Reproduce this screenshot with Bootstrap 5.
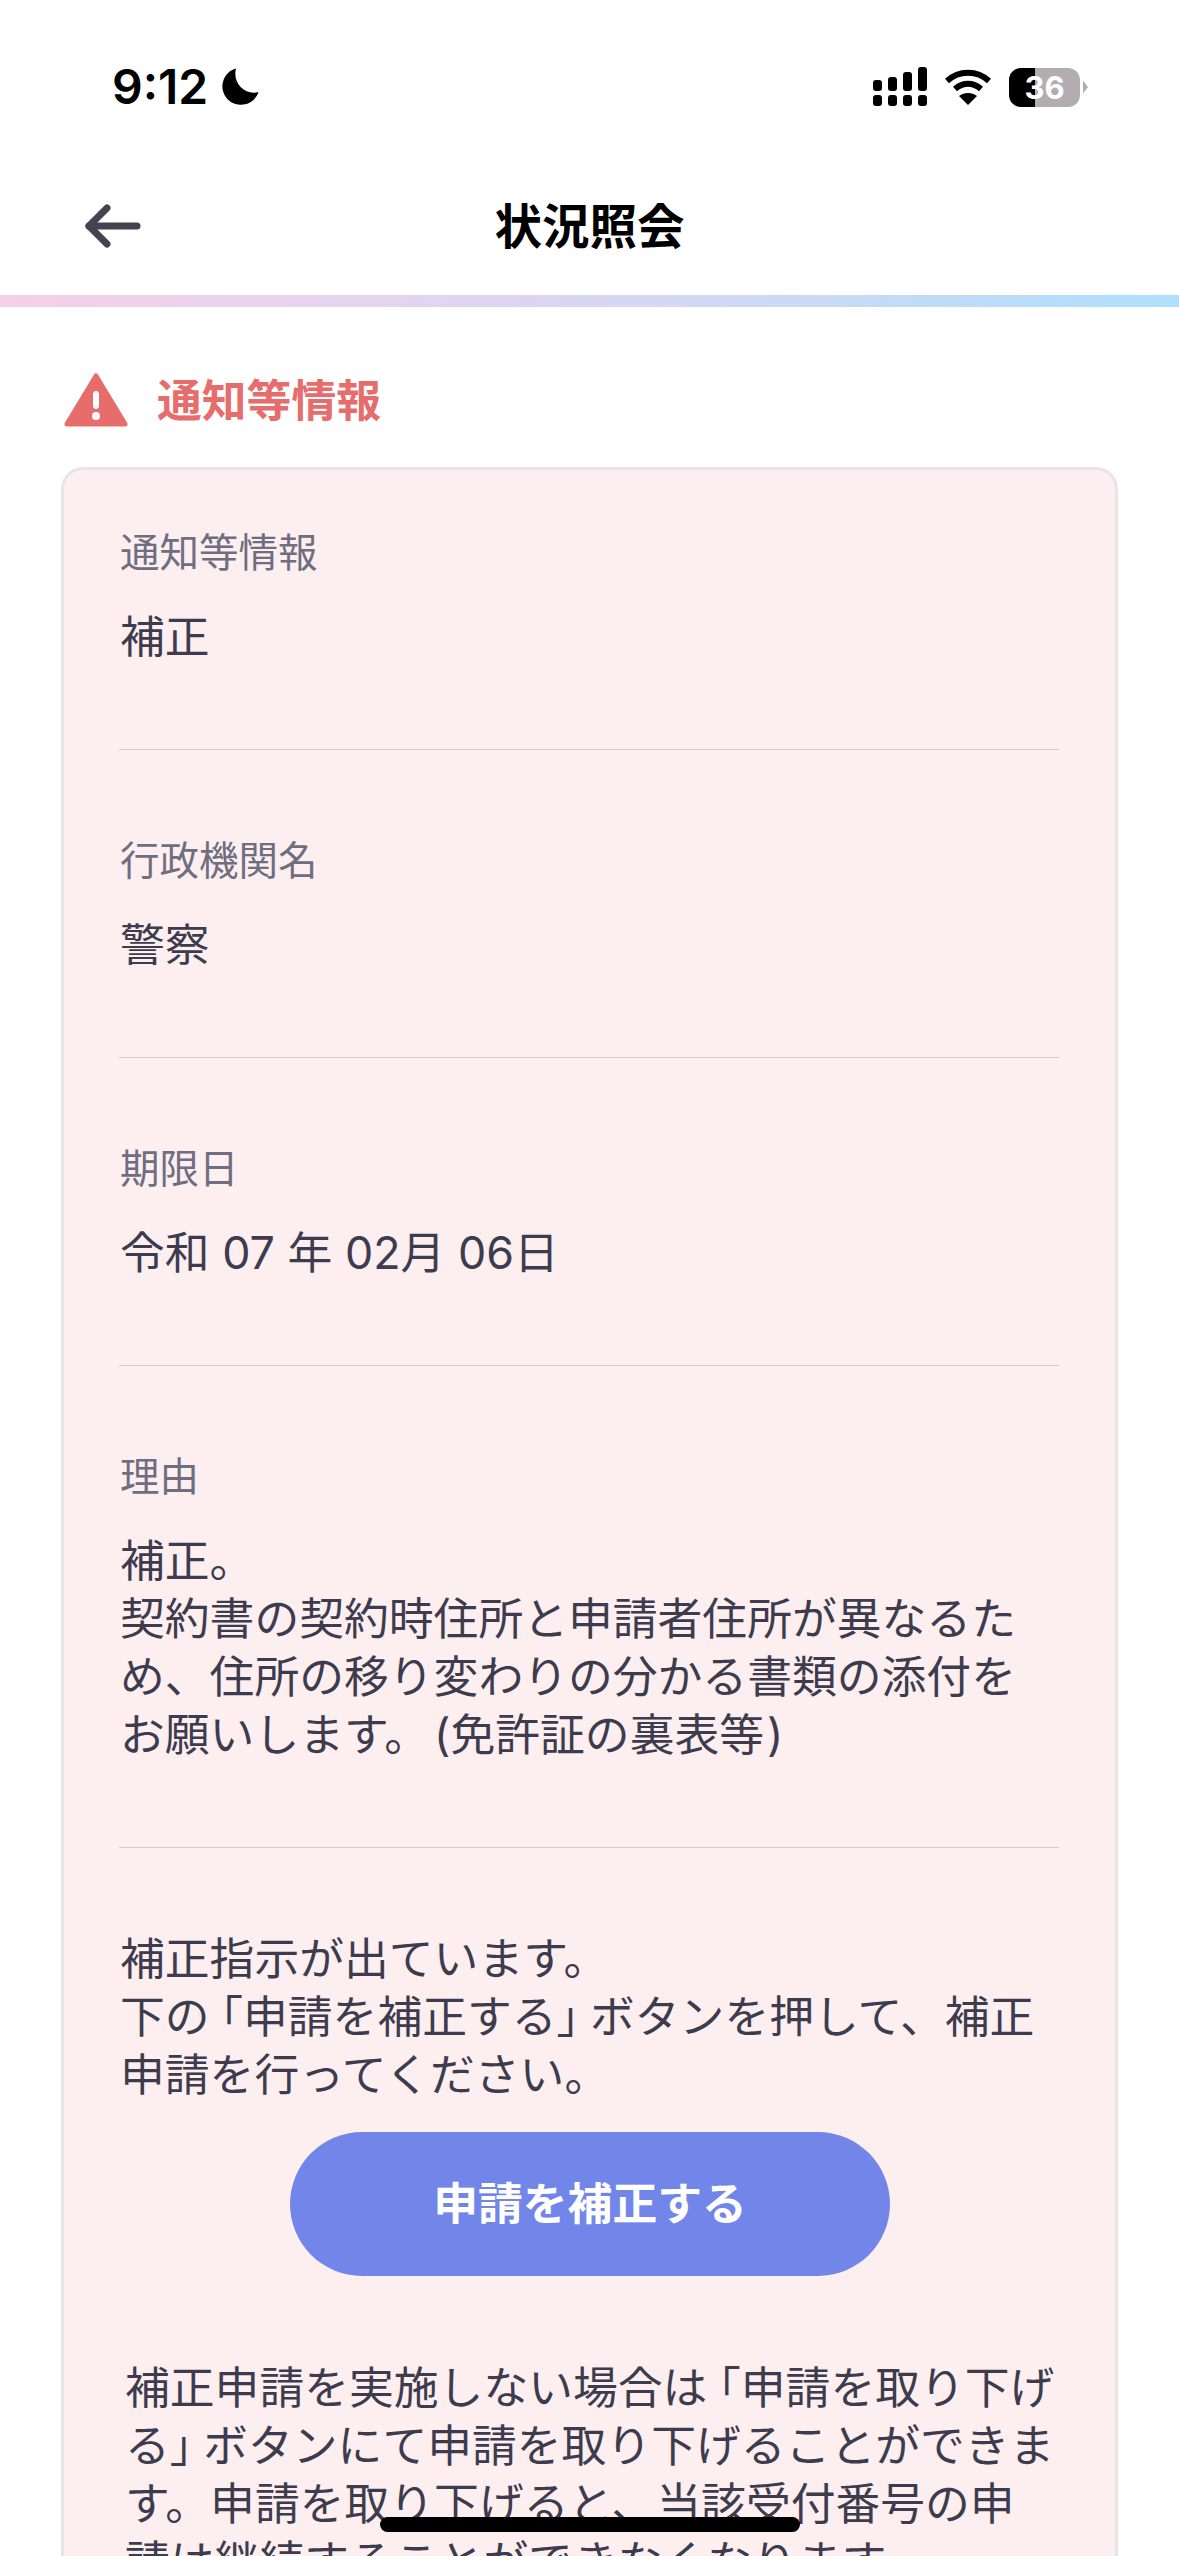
<!DOCTYPE html>
<html lang="ja">
<head>
    <meta charset="UTF-8">
    <meta name="viewport" content="width=device-width, initial-scale=1.0">
    <title>状況照会</title>
    <link href="https://cdn.jsdelivr.net/npm/bootstrap@5.3.0/dist/css/bootstrap.min.css" rel="stylesheet">
    <style>
        html, body {
            height: 2556px;
            overflow: hidden;
        }
        body {
            background: #fff;
            font-family: Inter, "Noto Sans CJK JP", "Noto Sans", sans-serif;
            color: #3d3c4e;
            font-size: 44.8px;
            line-height: 58px;
        }
        .status-row {
            height: 175px;
            padding: 62px 91px 0 112px;
        }
        .status-group {
            height: 50px;
        }
        .status-time {
            font-family: Inter, "Liberation Sans", sans-serif;
            font-weight: 600;
            font-size: 48px;
            line-height: 50px;
            color: #000;
            margin-right: 13px;
        }
        .batt-wrap {
            width: 71px;
            height: 39px;
            border-radius: 12px;
            background: linear-gradient(90deg, #000 37%, #b1adb1 37%);
            color: #fff;
            font-family: Inter, "Liberation Sans", sans-serif;
            font-weight: 700;
            font-size: 31px;
            line-height: 39px;
        }
        .batt-tip {
            width: 5px;
            height: 13px;
            margin-left: 3px;
            background: #b1adb1;
            clip-path: polygon(0 0, 100% 50%, 0 100%);
        }
        .wifi-icon {
            margin: 0 17px 0 16px;
        }
        .page-head {
            height: 120px;
            padding-bottom: 17px;
        }
        .back-arrow {
            position: absolute;
            left: 84px;
            top: 28px;
        }
        .page-title {
            font-size: 47.5px;
            font-weight: 700;
            color: #000;
            line-height: 60px;
            margin: 0;
        }
        .grad-bar {
            height: 12px;
            background: linear-gradient(90deg, #f6cfe9 0%, #d9d6f2 50%, #aedffc 100%);
        }
        .notice-head {
            padding: 65px 62px 0 64px;
            height: 160px;
        }
        .notice-title {
            font-size: 44.8px;
            font-weight: 700;
            line-height: 58px;
            color: #e76c6c;
            margin: 0 0 0 29px;
        }
        .notice-card {
            margin: 0 61px;
            background: #fdeff0;
            border: 3px solid #e6e5ea;
            border-radius: 22px;
            padding: 54px 56px 0 55px;
        }
        .info-block {
            padding-bottom: 83px;
            border-bottom: 1px solid #d6cacd;
            margin-bottom: 82px;
        }
        .info-label {
            font-size: 39.5px;
            color: #6f6e80;
            line-height: 58px;
            margin: 0 0 26px 1px;
        }
        .info-text {
            margin: 0 0 0 1px;
        }
        .kagi-l {
            font-feature-settings: "halt";
            padding-left: 11px;
        }
        .kagi-r {
            font-feature-settings: "halt";
            padding-right: 11px;
        }
        .kakko-l {
            padding-left: 5px;
        }
        .kakko-r {
            padding-left: 3px;
        }
        .fix-btn {
            width: 600px;
            height: 144px;
            margin: 28px 0 83px 171px;
            background: #7286ea;
            border: 0;
            border-radius: 72px;
            color: #fff;
            font-size: 44.8px;
            font-weight: 700;
            line-height: 58px;
        }
        .extra-text {
            margin-left: 6px;
        }
        .home-bar {
            position: absolute;
            left: 380px;
            top: 2517px;
            width: 420px;
            height: 15px;
            background: #000;
            border-radius: 8px;
        }
    </style>
</head>
<body class="position-relative">
    <div class="status-row d-flex justify-content-between align-items-start">
        <div class="status-group d-flex align-items-center">
            <span class="status-time">9:12</span>
            <svg width="38" height="38" viewBox="0 0 38 38"><path d="M15 .5A18.5 18.5 0 1 0 37.5 24C25 28 11 16 15 .5z" fill="#000"/></svg>
        </div>
        <div class="status-group d-flex align-items-center">
            <svg width="55" height="40" viewBox="0 0 55 40" fill="#000">
                <rect x="0" y="13" width="9" height="11" rx="3"/><rect x="15" y="10" width="9" height="14" rx="3"/><rect x="30" y="5" width="9" height="19" rx="3"/><rect x="45" y="0" width="9" height="24" rx="3"/>
                <rect x="0" y="28" width="9" height="11" rx="3"/><rect x="15" y="28" width="9" height="11" rx="3"/><rect x="30" y="28" width="9" height="11" rx="3"/><rect x="45" y="28" width="9" height="11" rx="3"/>
            </svg>
            <svg class="wifi-icon" width="48" height="36" viewBox="0 0 48 36" fill="none" stroke="#000" stroke-width="6">
                <path d="M3 12C15 1 33 1 45 12"/><path d="M11 20c8-7 18-7 26 0"/><path d="M24 36l-9-9c5-4 13-4 18 0z" fill="#000" stroke="none"/>
            </svg>
            <div class="batt-wrap text-center">36</div>
            <div class="batt-tip"></div>
        </div>
    </div>

    <div class="page-head position-relative d-flex justify-content-center align-items-center">
        <svg class="back-arrow" width="60" height="46" viewBox="0 0 60 46" fill="none" stroke="#44434f" stroke-width="7" stroke-linecap="round" stroke-linejoin="round">
            <path d="M23 5L5 23l18 18"/><path d="M5 23h48"/>
        </svg>
        <h1 class="page-title">状況照会</h1>
    </div>
    <div class="grad-bar"></div>

    <div class="notice-head d-flex align-items-start">
        <svg width="64" height="56" viewBox="0 0 64 56">
            <path d="M32 4L61 52H3z" fill="#e76c6c" stroke="#e76c6c" stroke-width="5" stroke-linejoin="round"/>
            <rect x="29" y="19" width="6" height="18" rx="3" fill="#fff"/><circle cx="32" cy="44" r="4" fill="#fff"/>
        </svg>
        <h2 class="notice-title">通知等情報</h2>
    </div>

    <div class="card notice-card">
        <div class="info-block">
            <div class="info-label">通知等情報</div>
            <p class="info-text">補正</p>
        </div>
        <div class="info-block">
            <div class="info-label">行政機関名</div>
            <p class="info-text">警察</p>
        </div>
        <div class="info-block">
            <div class="info-label">期限日</div>
            <p class="info-text">令和 07 年 02月 06日</p>
        </div>
        <div class="info-block">
            <div class="info-label">理由</div>
            <p class="info-text">補正。<br>契約書の契約時住所と申請者住所が異なるた<br>め、住所の移り変わりの分かる書類の添付を<br>お願いします。<span class="kakko-l">(</span>免許証の裏表等<span class="kakko-r">)</span></p>
        </div>
        <p class="info-text">補正指示が出ています。<br>下の<span class="kagi-l">「</span>申請を補正する<span class="kagi-r">」</span>ボタンを押して、補正<br>申請を行ってください。</p>
        <button type="button" class="btn fix-btn">申請を補正する</button>
        <p class="info-text extra-text">補正申請を実施しない場合は<span class="kagi-l">「</span>申請を取り下げ<br>る<span class="kagi-r">」</span>ボタンにて申請を取り下げることができま<br>す。申請を取り下げると、当該受付番号の申<br>請は継続することができなくなります。</p>
    </div>

    <div class="home-bar"></div>

    <script src="https://cdn.jsdelivr.net/npm/bootstrap@5.3.0/dist/js/bootstrap.bundle.min.js"></script>
</body>
</html>
